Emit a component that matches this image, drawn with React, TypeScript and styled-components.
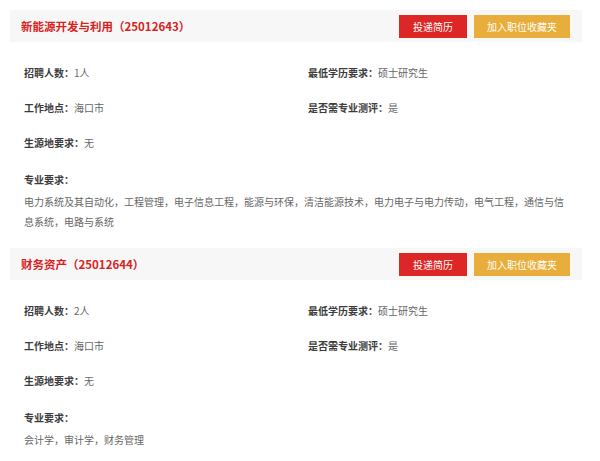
import React from "react";
import styled, { createGlobalStyle } from "styled-components";

const GlobalStyle = createGlobalStyle`
  html, body {
    margin: 0;
    padding: 0;
    background: #ffffff;
  }
  body {
    font-family: "Noto Sans CJK SC", "Noto Sans", sans-serif;
  }
`;

type Job = {
  title: string;
  code: string;
  count: string;
  education: string;
  place: string;
  evaluation: string;
  origin: string;
  majors: string;
};

const jobs: Job[] = [
  {
    title: "新能源开发与利用",
    code: "25012643",
    count: "1人",
    education: "硕士研究生",
    place: "海口市",
    evaluation: "是",
    origin: "无",
    majors:
      "电力系统及其自动化，工程管理，电子信息工程，能源与环保，清洁能源技术，电力电子与电力传动，电气工程，通信与信息系统，电路与系统",
  },
  {
    title: "财务资产",
    code: "25012644",
    count: "2人",
    education: "硕士研究生",
    place: "海口市",
    evaluation: "是",
    origin: "无",
    majors: "会计学，审计学，财务管理",
  },
];

const Page = () => (
  <>
    <GlobalStyle />
    <List>
      {jobs.map((job) => (
        <Card key={job.code}>
          <Header>
            <Title>
              {job.title}（{job.code}）
            </Title>
            <Actions>
              <ActionButton kind='apply'>投递简历</ActionButton>
              <ActionButton kind='favorite'>加入职位收藏夹</ActionButton>
            </Actions>
          </Header>
          <Body>
            <InfoGrid>
              <Item>
                <Label>招聘人数：</Label>
                <Value>{job.count}</Value>
              </Item>
              <Item>
                <Label>最低学历要求：</Label>
                <Value>{job.education}</Value>
              </Item>
              <Item>
                <Label>工作地点：</Label>
                <Value>{job.place}</Value>
              </Item>
              <Item>
                <Label>是否需专业测评：</Label>
                <Value>{job.evaluation}</Value>
              </Item>
              <Item>
                <Label>生源地要求：</Label>
                <Value>{job.origin}</Value>
              </Item>
            </InfoGrid>
            <Majors>
              <Label>专业要求：</Label>
              <MajorText>{job.majors}</MajorText>
            </Majors>
          </Body>
        </Card>
      ))}
    </List>
  </>
);

export default Page;

const List = styled.div`
  width: 572px;
  padding: 10px 0 0 10px;
`;

const Card = styled.section`
  display: flex;
  flex-direction: column;
`;

const Header = styled.div`
  height: 32px;
  display: flex;
  align-items: center;
  justify-content: space-between;
  padding: 0 12px 0 11px;
  background: #f7f7f7;
`;

const Title = styled.h3`
  margin: 0;
  font-size: 11.5px;
  font-weight: bold;
  color: #d8231d;
`;

const Actions = styled.div`
  display: flex;
  gap: 7px;
  padding-top: 1px;
`;

const ActionButton = styled.button<{ kind: "apply" | "favorite" }>`
  height: 23px;
  width: ${(p) => (p.kind === "apply" ? "68px" : "96px")};
  border: none;
  padding: 0;
  font-family: inherit;
  font-size: 10px;
  color: #ffffff;
  background: ${(p) => (p.kind === "apply" ? "#dd2626" : "#e8ad3a")};
  cursor: pointer;
`;

const Body = styled.div`
  padding: 21px 0 16px 14px;
`;

const InfoGrid = styled.div`
  display: grid;
  grid-template-columns: 284px 1fr;
  row-gap: 15px;
`;

const Item = styled.div`
  line-height: 20px;
  font-size: 10px;
`;

const Label = styled.span`
  font-weight: bold;
  color: #3c3c3c;
  font-size: 10px;
  line-height: 20px;
`;

const Value = styled.span`
  color: #666666;
`;

const Majors = styled.div`
  margin-top: 17px;
  display: flex;
  flex-direction: column;
  gap: 2px;
`;

const MajorText = styled.p`
  margin: 0;
  width: 540px;
  font-size: 10px;
  line-height: 20px;
  color: #666666;
`;
